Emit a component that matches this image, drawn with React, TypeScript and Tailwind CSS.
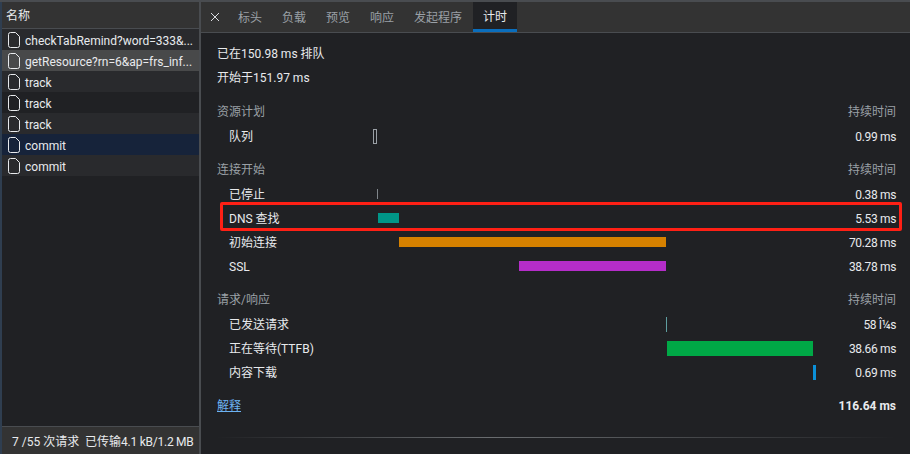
const requests = [
  { name: 'checkTabRemind?word=333&...', bg: 'bg-[#292a2d]' },
  { name: 'getResource?rn=6&ap=frs_inf...', bg: 'bg-[#48494a]' },
  { name: 'track', bg: 'bg-[#292a2d]' },
  { name: 'track', bg: 'bg-[#202124]' },
  { name: 'track', bg: 'bg-[#292a2d]' },
  { name: 'commit', bg: 'bg-[#16233a]' },
  { name: 'commit', bg: 'bg-[#292a2d]' },
];

const tabs = ['标头', '负载', '预览', '响应', '发起程序'];

type Row = { label: string; value: string; left: number; width: number; height: number; color: string };

const groups: { title: string; rows: Row[] }[] = [
  {
    title: '资源计划',
    rows: [{ label: '队列', value: '0.99 ms', left: 144, width: 4, height: 15, color: 'border border-[#9aa0a6]' }],
  },
  {
    title: '连接开始',
    rows: [
      { label: '已停止', value: '0.38 ms', left: 148, width: 1, height: 10, color: 'bg-[#80868b]' },
      { label: 'DNS 查找', value: '5.53 ms', left: 149, width: 21, height: 10, color: 'bg-[#009688]' },
      { label: '初始连接', value: '70.28 ms', left: 170, width: 267, height: 10, color: 'bg-[#d68100]' },
      { label: 'SSL', value: '38.78 ms', left: 290, width: 147, height: 10, color: 'bg-[#b52dc9]' },
    ],
  },
  {
    title: '请求/响应',
    rows: [
      { label: '已发送请求', value: '58 Î¼s', left: 437, width: 1, height: 15, color: 'bg-[#5f9ea0]' },
      { label: '正在等待(TTFB)', value: '38.66 ms', left: 438, width: 146, height: 15, color: 'bg-[#00a846]' },
      { label: '内容下载', value: '0.69 ms', left: 584, width: 3, height: 15, color: 'bg-[#0b90d8]' },
    ],
  },
];

function FileIcon() {
  return (
    <svg width="12" height="16" viewBox="0 0 12 16" fill="none" className="shrink-0">
      <path d="M0.5 2.5 Q0.5 0.5 2.5 0.5 H7.5 L11.5 4.5 V13.5 Q11.5 15.5 9.5 15.5 H2.5 Q0.5 15.5 0.5 13.5 Z" stroke="#e8eaed" />
    </svg>
  );
}

export default function App() {
  return (
    <div className="relative flex h-[454px] w-[910px] flex-col overflow-hidden bg-[#202124] font-['Roboto','Noto_Sans_CJK_SC',sans-serif] text-xs text-[#e8eaed]">
      <div className="h-[2px] shrink-0 bg-[#494c50]" />
      <div className="flex min-h-0 flex-1">
        {/* left list */}
        <div className="flex w-[199px] shrink-0 flex-col border-l-2 border-[#2f3e50]">
          <div className="flex h-[27px] shrink-0 items-center border-b border-[#494c50] bg-[#333333] pl-1 pt-[2px]">名称</div>
          <div className="flex-1">
            {requests.map((r, i) => (
              <div key={i} className={`flex h-[21px] items-center gap-[5px] pl-[6px] ${r.bg}`}>
                <FileIcon />
                <span className="whitespace-nowrap pt-[2px]">{r.name}</span>
              </div>
            ))}
          </div>
          <div className="flex h-[28px] shrink-0 items-center whitespace-nowrap border-t border-[#494c50] bg-[#333333] pl-[10px] pt-[2px]">
            7 /55 次请求 &nbsp;已传输<span className="tracking-[-0.25px]">4.1 kB/1.2 MB</span>
          </div>
        </div>

        <div className="w-[2px] shrink-0 bg-[#494c50]" />

        {/* timing panel */}
        <div className="flex min-w-0 flex-1 flex-col">
          <div className="flex h-[31px] shrink-0 items-stretch border-b border-[#494c50] bg-[#333333] text-[#9aa0a6]">
            <div className="flex w-[27px] items-center justify-center">
              <svg width="10" height="10" viewBox="0 0 10 10" stroke="#dadce0" strokeWidth="1">
                <path d="M1 1 L9 9 M9 1 L1 9" />
              </svg>
            </div>
            {tabs.map((t) => (
              <div key={t} className="flex items-center px-[10px] pt-[2px]">{t}</div>
            ))}
            <div className="ml-[1px] flex items-center border-b-[3px] border-[#0a6ebd] bg-[#202124] px-[10px] pt-[3px] text-[#e8eaed]">计时</div>
          </div>

          <div className="flex flex-1 flex-col pl-[16px] pr-[14px] pt-[8px]">
            <div className="flex h-[24px] items-center pt-[2px]">已在150.98 ms 排队</div>
            <div className="flex h-[24px] items-center pt-[2px]">开始于151.97 ms</div>

            <div className="mt-[1px]" />
            {groups.map((g) => (
              <div key={g.title} className="mt-[10px]">
                <div className="flex h-[24px] items-center justify-between text-[#9aa0a6]">
                  <span>{g.title}</span>
                  <span>持续时间</span>
                </div>
                {g.rows.map((r) => (
                  <div key={r.label} className="flex h-[24px] items-center">
                    <div className="w-0 whitespace-nowrap pl-[12px] pt-[2px]">{r.label}</div>
                    <div
                      className={`shrink-0 ${r.color}`}
                      style={{ marginLeft: r.left, width: r.width, height: r.height }}
                    />
                    <div className="flex-1 whitespace-nowrap pt-[2px] text-right tracking-[-0.35px]">{r.value}</div>
                  </div>
                ))}
              </div>
            ))}

            <div className="mt-[10px] flex h-[24px] items-center justify-between">
              <a className="text-[#6db3f2] underline">解释</a>
              <span className="font-bold">116.64 ms</span>
            </div>
            <div className="mt-[19px] h-px bg-gradient-to-r from-transparent via-[#6a6d70] via-40% to-transparent" />
          </div>
        </div>
      </div>

      {/* red annotation round the DNS row */}
      <div className="absolute left-[220px] top-[202px] h-[29px] w-[682px] rounded-[2px] border-[3px] border-[#ff2015]" />
    </div>
  );
}
